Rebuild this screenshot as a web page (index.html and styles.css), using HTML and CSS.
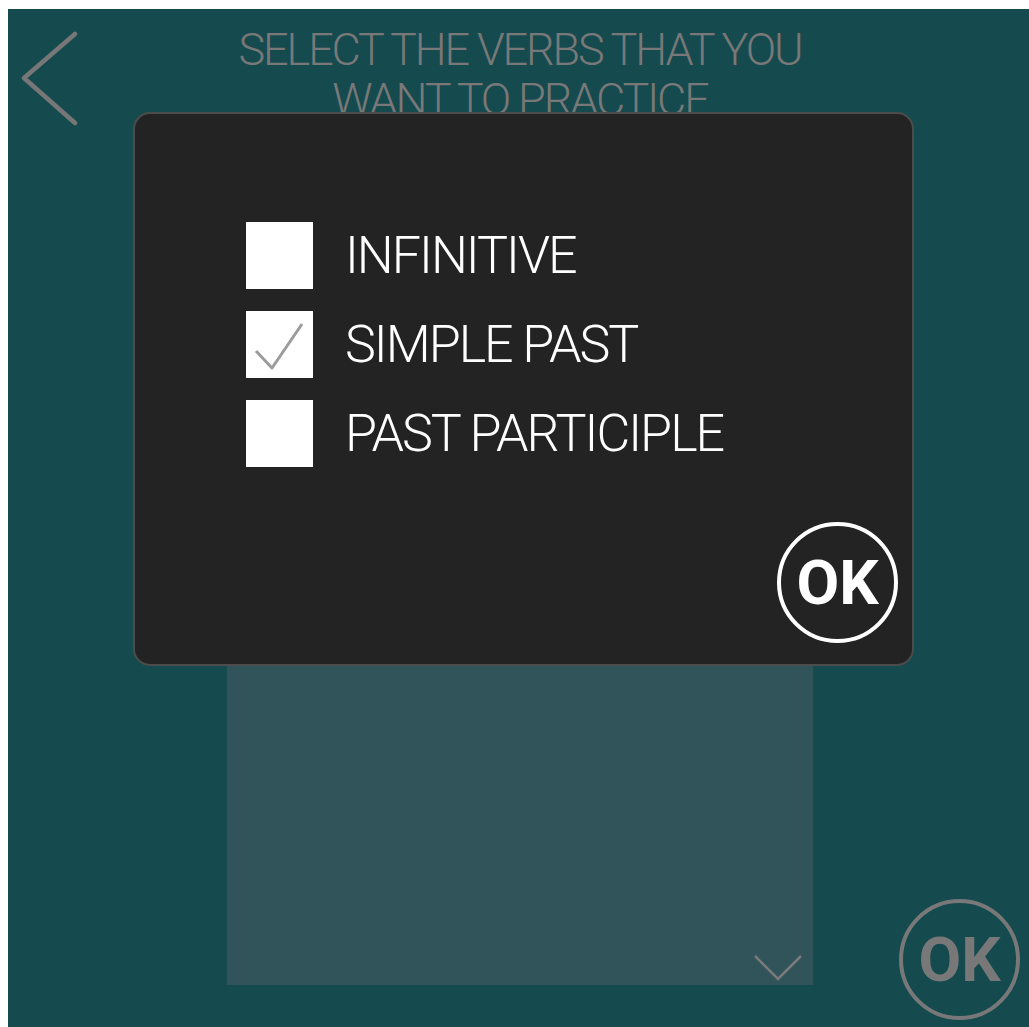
FILE: index.html
```html
<!DOCTYPE html>
<html lang="en">
<head>
<meta charset="utf-8">
<title>Select verbs</title>
<link rel="stylesheet" href="styles.css">
</head>
<body>
<div class="app">
  <header class="header">
    <button class="back" aria-label="Back">
      <svg width="60" height="96" viewBox="0 0 60 96"><polyline points="55,4 4,48 55,93" fill="none" stroke="#777" stroke-width="4.5" stroke-linecap="round" stroke-linejoin="round"/></svg>
    </button>
    <h1 class="title">SELECT THE VERBS THAT YOU<br>WANT TO PRACTICE</h1>
    <div class="spacer"></div>
  </header>
  <main class="main">
    <div class="side"></div>
    <section class="panel">
      <svg class="down" width="50" height="30" viewBox="0 0 50 30"><polyline points="2,3 25,26 48,3" fill="none" stroke="#7a7a7a" stroke-width="2.5"/></svg>
    </section>
    <div class="side side-right">
      <button class="ok ok-dim">OK</button>
    </div>
  </main>

  <div class="modal">
    <ul class="options">
      <li class="option"><span class="box"></span><span class="label">INFINITIVE</span></li>
      <li class="option"><span class="box checked"><svg width="67" height="67" viewBox="0 0 67 67"><polyline points="10,40 26,57 56,13" fill="none" stroke="#9c9c9c" stroke-width="3" stroke-linejoin="round"/></svg></span><span class="label">SIMPLE PAST</span></li>
      <li class="option"><span class="box"></span><span class="label">PAST PARTICIPLE</span></li>
    </ul>
    <button class="ok ok-bright">OK</button>
  </div>
</div>
</body>
</html>
```

FILE: styles.css
```css
html {
  overflow: hidden;
  background: #ffffff;
}
body {
  margin: 9px 0 0 8px;
  font-family: Roboto, "Liberation Sans", sans-serif;
}
.app {
  position: relative;
  width: 1024px;
  height: 1024px;
  background: #154a4e;
  display: flex;
  flex-direction: column;
  overflow: hidden;
}
.header {
  display: grid;
  grid-template-columns: 1fr auto 1fr;
  align-items: start;
  height: 116px;
}
.back {
  background: none;
  border: 0;
  padding: 0;
  margin: 21px 0 0 12px;
  width: 60px;
  height: 96px;
  justify-self: start;
}
.back svg { display: block; }
.title {
  margin: 16px 0 0 0;
  font-size: 45px;
  line-height: 50px;
  font-weight: 300;
  letter-spacing: -2.1px;
  color: #787878;
  text-align: center;
  white-space: nowrap;
}
.main {
  flex: 1;
  display: grid;
  grid-template-columns: 1fr 586px 1fr;
}
.panel {
  background: #30545a;
  margin: 10px 0 48px 0;
  display: flex;
  justify-content: flex-end;
  align-items: flex-end;
}
.down {
  display: block;
  margin: 0 10px 2px 0;
}
.side-right {
  display: flex;
  justify-content: flex-end;
  align-items: flex-end;
  padding: 0 12px 13px 0;
}
.ok {
  width: 121px;
  height: 121px;
  box-sizing: border-box;
  border-radius: 50%;
  background: transparent;
  font-family: Roboto, "Liberation Sans", sans-serif;
  font-weight: 700;
  font-size: 62px;
  letter-spacing: 0;
  line-height: 1;
  padding: 0;
  display: flex;
  align-items: center;
  justify-content: center;
}
.ok-dim {
  border: 4px solid #787878;
  color: #787878;
}
.modal {
  position: absolute;
  left: 125px;
  top: 103px;
  width: 781px;
  height: 554px;
  box-sizing: border-box;
  background: #232323;
  border: 2px solid #4c4c4c;
  border-radius: 17px;
  padding: 108px 14px 21px 111px;
  display: flex;
  flex-direction: column;
}
.options {
  list-style: none;
  margin: 0;
  padding: 0;
  display: flex;
  flex-direction: column;
  gap: 22px;
}
.option {
  display: flex;
  align-items: center;
  gap: 32px;
}
.box {
  width: 67px;
  height: 67px;
  background: #ffffff;
  flex: none;
}
.box svg { display: block; }
.label {
  color: #ffffff;
  font-size: 52px;
  line-height: 52px;
  font-weight: 300;
  letter-spacing: -2px;
  white-space: nowrap;
}
.ok-bright {
  margin-top: auto;
  align-self: flex-end;
  border: 4px solid #ffffff;
  color: #ffffff;
}
```
